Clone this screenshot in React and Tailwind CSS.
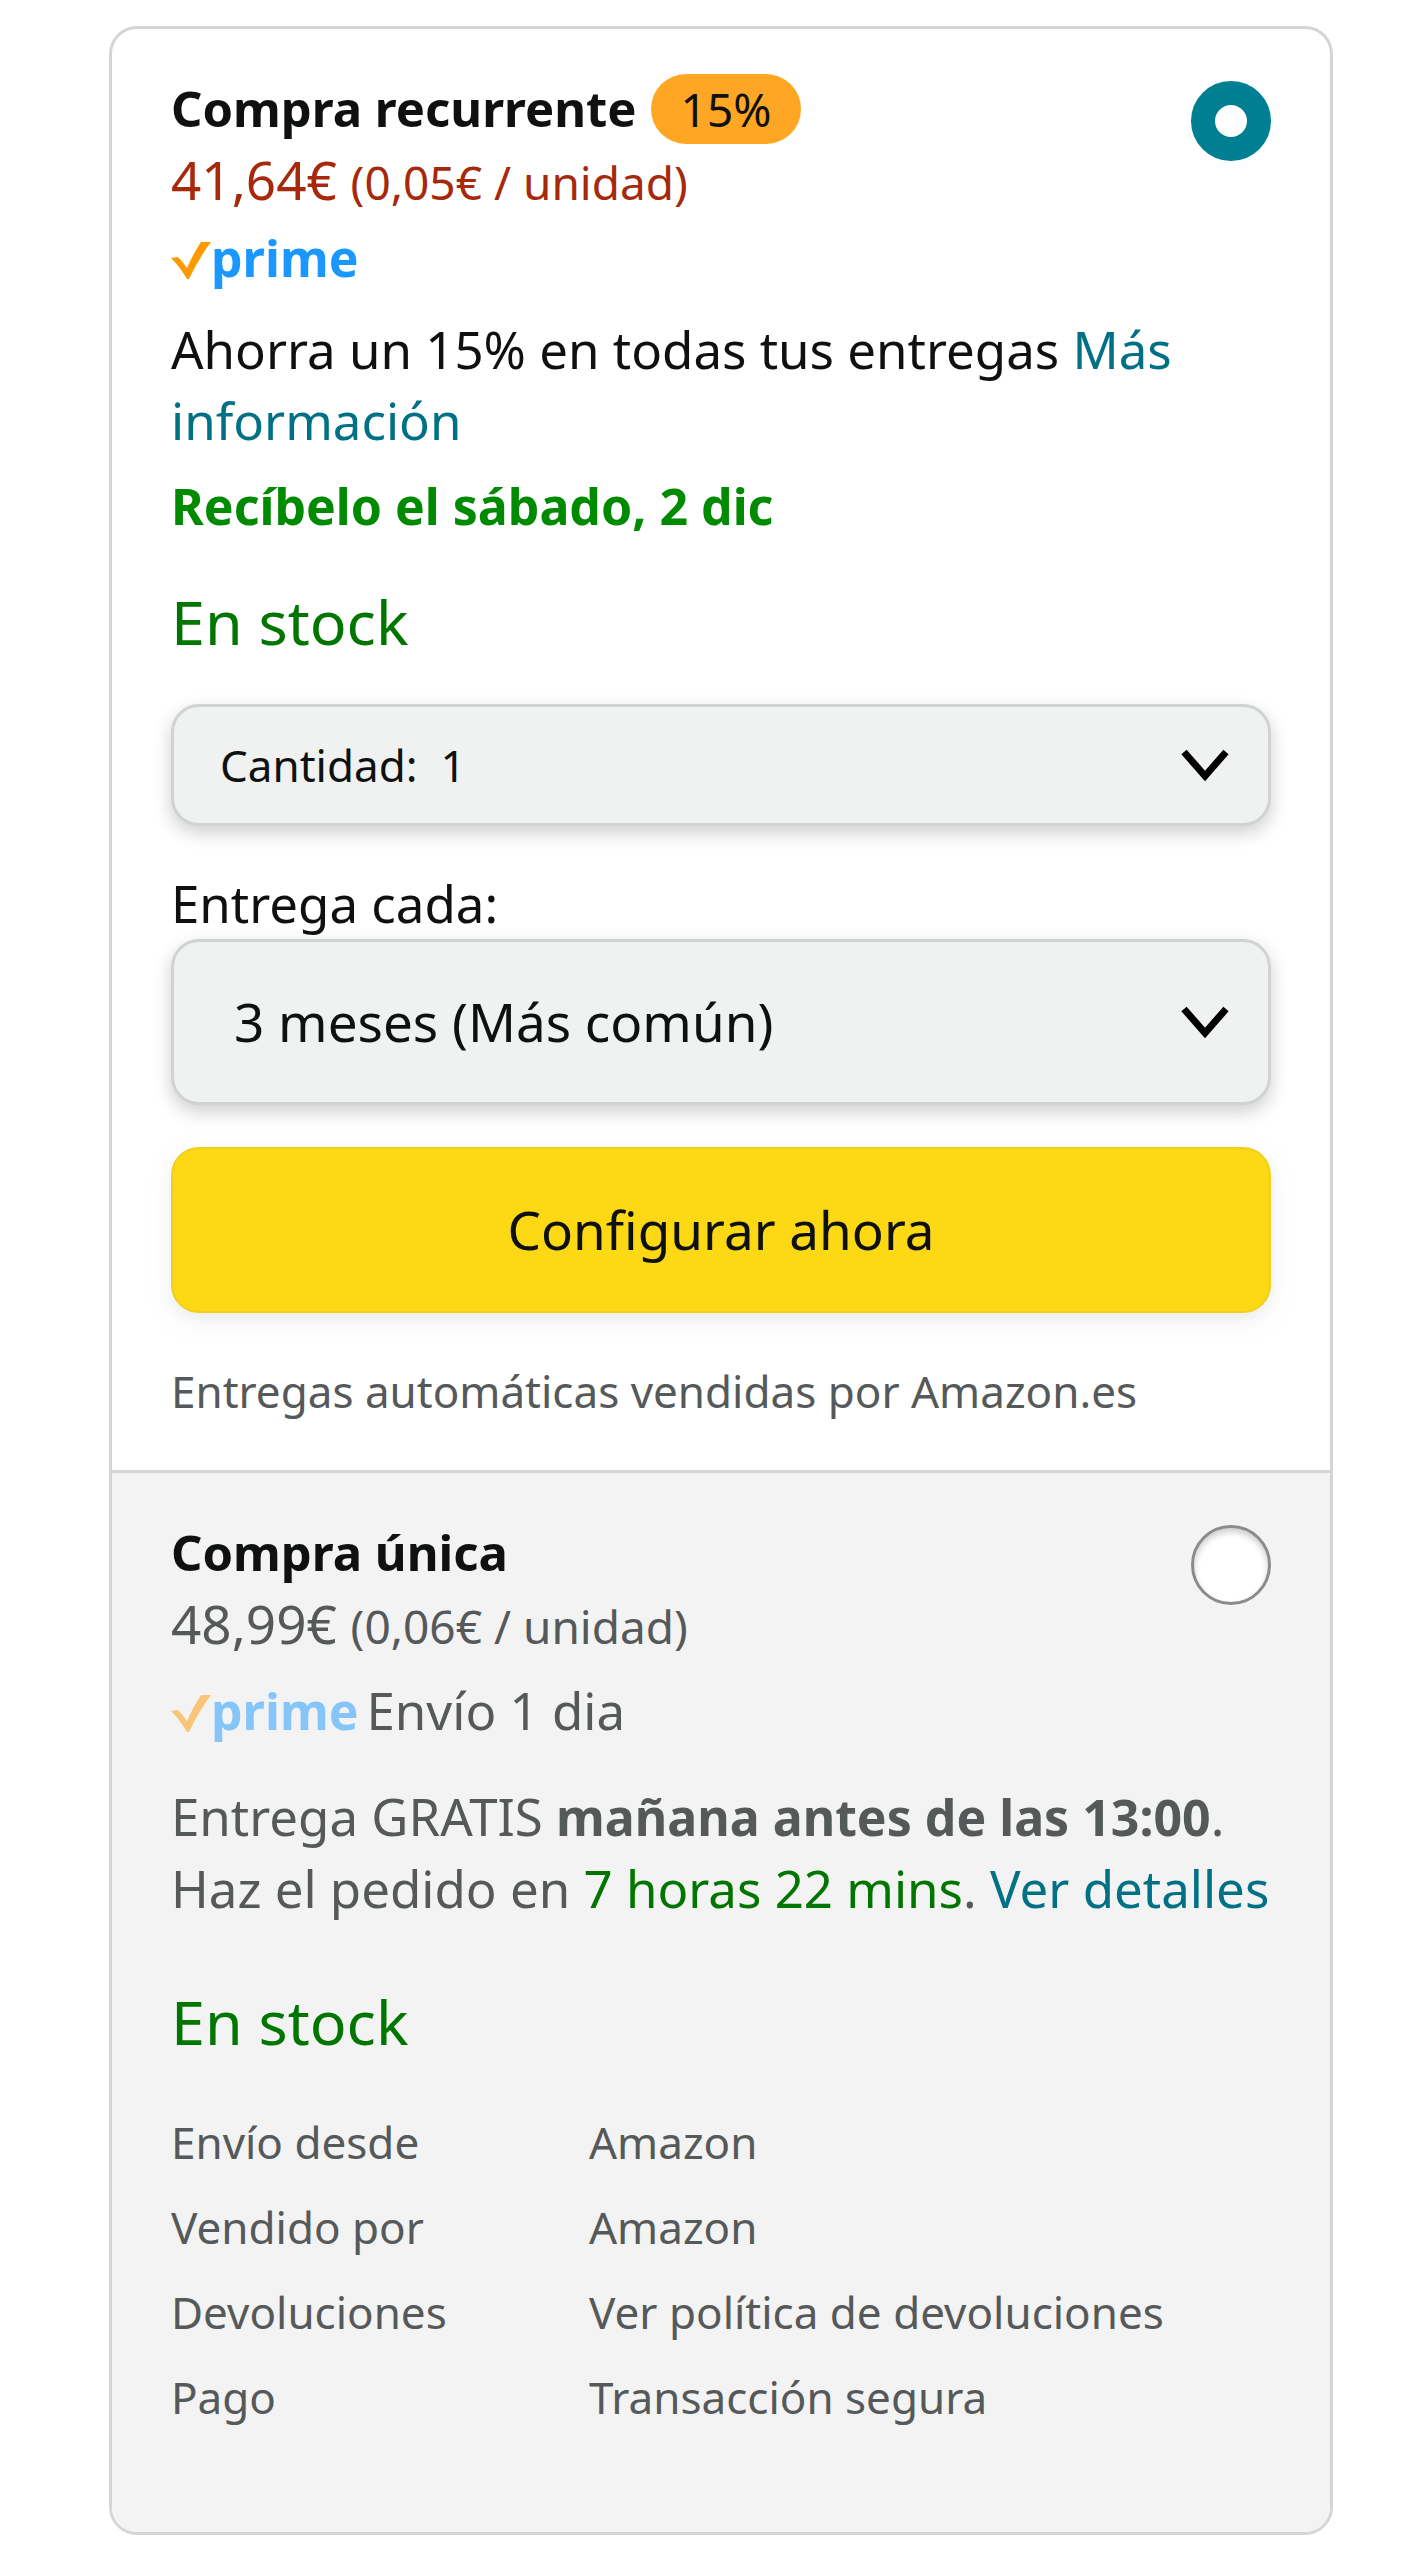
import { useState } from "react";

const DETAILS = [
  { label: "Envío desde", value: "Amazon" },
  { label: "Vendido por", value: "Amazon" },
  { label: "Devoluciones", value: "Ver política de devoluciones" },
  { label: "Pago", value: "Transacción segura" },
];

function PrimeLogo({ faded }) {
  return (
    <span
      className={`inline-flex items-baseline font-bold text-[#1a98ff] text-[50px] leading-[71px] ${
        faded ? "opacity-50" : ""
      }`}
    >
      <svg viewBox="0 0 40 37" className="w-10 h-[37px] translate-y-0.5" aria-hidden="true">
        <path d="M0 16 L7 15 Q12 20 16 26 Q22 12 30 0 L40 0 Q28 16 18 37 L16 37 Q9 25 0 16Z" fill="#ff9900" />
      </svg>
      prime
    </span>
  );
}

function Chevron() {
  return (
    <svg
      viewBox="0 0 48 32"
      className="pointer-events-none absolute right-[42px] top-1/2 w-12 h-8 -translate-y-1/2"
      fill="none"
      stroke="#000"
      strokeWidth="7"
      aria-hidden="true"
    >
      <path d="M3 3 L24 27 L45 3" />
    </svg>
  );
}

function PlanRadio({ id, value, plan, onChange }) {
  return (
    <input
      type="radio"
      id={id}
      name="plan"
      value={value}
      checked={plan === value}
      onChange={() => onChange(value)}
      className="mt-2 size-20 shrink-0 appearance-none rounded-full border-3 border-[#888c8c] bg-white shadow-[inset_0_4px_6px_rgba(15,17,17,0.2)] checked:border-24 checked:border-[#007f92] checked:shadow-none"
    />
  );
}

function Price({ amount, unit, className }) {
  return (
    <p className={`text-[53px] leading-[71px] ${className}`}>
      {amount} <span className="text-[46px] leading-15">({unit} / unidad)</span>
    </p>
  );
}

export default function App() {
  const [plan, setPlan] = useState("recurring");
  const [quantity, setQuantity] = useState("1");
  const [frequency, setFrequency] = useState("3");

  return (
    <main className="bg-white pt-[26px] pr-[89px] pb-9 pl-[109px] font-['Noto_Sans','Open_Sans',sans-serif] text-[#0f1111]">
      <div className="overflow-hidden rounded-[28px] border-3 border-[#d5d5d5]">
        <section className="px-[59px] pt-11 pb-[49px]">
          <div className="flex items-start justify-between">
            <div>
              <div className="flex items-baseline gap-3.5">
                <label htmlFor="plan-recurring" className="font-bold text-[49px] leading-[71px]">
                  Compra recurrente
                </label>
                <span className="rounded-full bg-[#ffa724] px-[30px] text-[46px] leading-[70px]">15%</span>
              </div>
              <Price amount="41,64€" unit="0,05€" className="text-[#a7290b]" />
            </div>
            <PlanRadio id="plan-recurring" value="recurring" plan={plan} onChange={setPlan} />
          </div>

          <div className="mt-2 flex">
            <PrimeLogo />
          </div>

          <p className="mt-5 text-[51px] leading-[71px]">
            Ahorra un 15% en todas tus entregas{" "}
            <a href="#info" className="text-[#007185]">
              Más información
            </a>
          </p>
          <p className="mt-[15px] font-bold text-[50px] leading-[71px] text-[#008a00]">Recíbelo el sábado, 2 dic</p>
          <p className="mt-10 text-[61px] leading-20 text-[#007600]">En stock</p>

          <div className="relative mt-[42px]">
            <select
              aria-label="Cantidad"
              value={quantity}
              onChange={(e) => setQuantity(e.target.value)}
              className="block h-[122px] w-full appearance-none rounded-[28px] border-3 border-[#d0d3d3] bg-[#f0f2f2] px-[46px] text-[44px] shadow-[0_7px_18px_rgba(15,17,17,0.2)]"
            >
              <option value="1">Cantidad:&nbsp;&nbsp;1</option>
              <option value="2">Cantidad:&nbsp;&nbsp;2</option>
              <option value="3">Cantidad:&nbsp;&nbsp;3</option>
            </select>
            <Chevron />
          </div>

          <label htmlFor="frequency" className="mt-[42px] block text-[51px] leading-[71px]">
            Entrega cada:
          </label>
          <div className="relative">
            <select
              id="frequency"
              value={frequency}
              onChange={(e) => setFrequency(e.target.value)}
              className="block h-[166px] w-full appearance-none rounded-[28px] border-3 border-[#d0d3d3] bg-[#f0f2f2] px-[60px] text-[53px] shadow-[0_7px_18px_rgba(15,17,17,0.2)]"
            >
              <option value="1">1 mes</option>
              <option value="3">3 meses (Más común)</option>
              <option value="6">6 meses</option>
            </select>
            <Chevron />
          </div>

          <button
            type="button"
            className="mt-[42px] block h-[166px] w-full rounded-[28px] border-2 border-[#f2cf1a] bg-[#fdd814] text-[53px] shadow-[0_7px_18px_rgba(213,217,217,0.5)]"
          >
            Configurar ahora
          </button>

          <p className="mt-12 text-[44px] leading-15 text-[#565959]">Entregas automáticas vendidas por Amazon.es</p>
        </section>

        <section className="border-t-3 border-[#d5d5d5] bg-[#f3f3f3] px-[59px] pt-11 pb-[92px] text-[#565959]">
          <div className="flex items-start justify-between">
            <div>
              <label htmlFor="plan-once" className="block font-bold text-[49px] leading-[71px] text-[#0f1111]">
                Compra única
              </label>
              <Price amount="48,99€" unit="0,06€" className="text-[#565959]" />
            </div>
            <PlanRadio id="plan-once" value="once" plan={plan} onChange={setPlan} />
          </div>

          <div className="mt-4 flex items-baseline gap-2">
            <PrimeLogo faded />
            <span className="text-[51px] leading-[71px]">Envío 1 dia</span>
          </div>

          <p className="mt-[34px] text-[51px] leading-[71px]">
            Entrega GRATIS <b className="text-[50px]">mañana antes de las 13:00</b>. Haz el pedido en{" "}
            <span className="text-[#007600]">7 horas 22 mins</span>.{" "}
            <a href="#detalles" className="text-[#007185]">
              Ver detalles
            </a>
          </p>
          <p className="mt-[58px] text-[61px] leading-20 text-[#007600]">En stock</p>

          <table className="mt-[38px] w-full text-left text-[44px] leading-[85px]">
            <tbody>
              {DETAILS.map((row) => (
                <tr key={row.label}>
                  <th scope="row" className="w-[38%] p-0 font-normal">
                    {row.label}
                  </th>
                  <td className="p-0">{row.value}</td>
                </tr>
              ))}
            </tbody>
          </table>
        </section>
      </div>
    </main>
  );
}
